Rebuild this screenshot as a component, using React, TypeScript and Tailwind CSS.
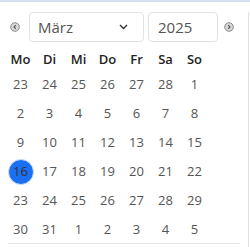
import React from "react";

const weekdays = ["Mo", "Di", "Mi", "Do", "Fr", "Sa", "So"];
const weeks = [
  [23, 24, 25, 26, 27, 28, 1],
  [2, 3, 4, 5, 6, 7, 8],
  [9, 10, 11, 12, 13, 14, 15],
  [16, 17, 18, 19, 20, 21, 22],
  [23, 24, 25, 26, 27, 28, 29],
  [30, 31, 1, 2, 3, 4, 5],
];

function Arrow({ dir }: { dir: "left" | "right" }) {
  return (
    <svg width="10" height="10" viewBox="0 0 10 10" className="shrink-0">
      <circle cx="5" cy="5" r="4.3" fill="#d8d8d8" stroke="#8a8a8a" strokeWidth="1" />
      {dir === "left" ? (
        <path d="M5.8 3.2 L4 5 L5.8 6.8" fill="none" stroke="#555" strokeWidth="1.1" />
      ) : (
        <path d="M4.2 3.2 L6 5 L4.2 6.8" fill="none" stroke="#555" strokeWidth="1.1" />
      )}
    </svg>
  );
}

export default function App() {
  return (
    <div
      className="w-[250px] h-[247px] bg-white border-t-2 border-[#d3e0f4] flex overflow-hidden"
      style={{ fontFamily: "'Open Sans', Lato, sans-serif" }}
    >
      <div className="w-[248px] flex flex-col">
        <div className="flex items-center mt-[10px] pl-[10px] h-[30px]">
          <Arrow dir="left" />
          <div className="ml-[9px] w-[115px] h-[30px] border border-[#e2e2e2] rounded-[4px] flex items-center justify-between pl-[8px] pr-[15px]">
            <span className="text-[15px] text-[#555]">März</span>
            <svg width="9" height="6" viewBox="0 0 9 6">
              <path d="M1 1 L4.5 4.5 L8 1" fill="none" stroke="#333" strokeWidth="1.4" />
            </svg>
          </div>
          <div className="ml-[4px] w-[70px] h-[30px] border border-[#e2e2e2] rounded-[4px] flex items-center pl-[9px]">
            <span className="text-[15px] text-[#555]">2025</span>
          </div>
          <div className="ml-[6px]">
            <Arrow dir="right" />
          </div>
        </div>
        <div className="ml-[6px] mt-[7px] grid grid-cols-[repeat(7,29px)] h-[21px] items-center">
          {weekdays.map((d) => (
            <div key={d} className="text-center text-[13px] font-semibold text-[#222]">
              {d}
            </div>
          ))}
        </div>
        <div className="ml-[6px] grid grid-cols-[repeat(7,29px)]">
          {weeks.flat().map((n, i) => (
            <div key={i} className="h-[29px] flex items-center justify-center">
              {i === 21 ? (
                <div className="w-[26px] h-[26px] rounded-full bg-[#1a6ff2] border border-[#cfe0fb] flex items-center justify-center text-[13px] text-[#333]">
                  {n}
                </div>
              ) : (
                <span className="text-[13px] text-[#555]">{n}</span>
              )}
            </div>
          ))}
        </div>
        <div className="ml-[8px] w-[232px] h-px bg-[#e4e4e4] -mt-[1px]" />
      </div>
      <div className="w-px bg-[#e2e2e2] mt-[10px]" />
    </div>
  );
}
